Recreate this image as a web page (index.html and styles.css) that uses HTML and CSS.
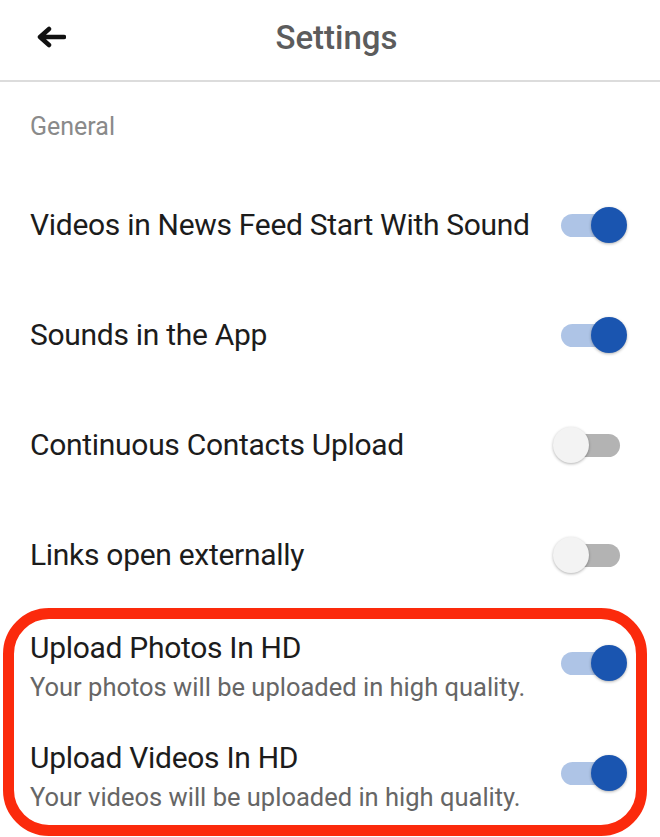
FILE: index.html
```html
<!DOCTYPE html>
<html lang="en">
<head>
    <meta charset="UTF-8">
    <meta name="viewport" content="width=device-width, initial-scale=1.0">
    <title>Settings</title>
    <link rel="stylesheet" href="styles.css">
</head>
<body>
    <!-- top bar -->
    <div class="top-bar">
        <svg class="back-icon" width="30" height="22" viewBox="0 0 30 22">
            <path d="M28 11 H5 M13 3 L4 11 L13 19" fill="none" stroke="#111" stroke-width="4.5" stroke-linecap="round" stroke-linejoin="round"/>
        </svg>
        <div class="top-title">Settings</div>
        <div></div>
    </div>

    <div class="section-label">General</div>

    <div class="setting-row">
        <span class="row-title">Videos in News Feed Start With Sound</span>
        <div class="switch on"><span class="knob"></span></div>
    </div>
    <div class="setting-row">
        <span class="row-title">Sounds in the App</span>
        <div class="switch on"><span class="knob"></span></div>
    </div>
    <div class="setting-row">
        <span class="row-title">Continuous Contacts Upload</span>
        <div class="switch"><span class="knob"></span></div>
    </div>
    <div class="setting-row">
        <span class="row-title">Links open externally</span>
        <div class="switch"><span class="knob"></span></div>
    </div>

    <!-- highlighted block -->
    <div class="highlight">
        <div class="setting-row tall">
            <div class="row-text">
                <div class="row-title">Upload Photos In HD</div>
                <div class="row-sub">Your photos will be uploaded in high quality.</div>
            </div>
            <div class="switch on"><span class="knob"></span></div>
        </div>
        <div class="setting-row tall">
            <div class="row-text">
                <div class="row-title">Upload Videos In HD</div>
                <div class="row-sub">Your videos will be uploaded in high quality.</div>
            </div>
            <div class="switch on"><span class="knob"></span></div>
        </div>
    </div>
</body>
</html>
```

FILE: styles.css
```css
body{
    margin: 0;
    background: #fff;
    font-family: Roboto, "Liberation Sans", sans-serif;
    color: #1c1c1c;
}

.top-bar{
    height: 80px;
    display: grid;
    grid-template-columns: 1fr auto 1fr;
    align-items: center;
    border-bottom: 2px solid #dcdcdc;
}

.back-icon{
    margin-left: 36px;
    margin-top: -6px;
}

.top-title{
    font-size: 33px;
    font-weight: 500;
    color: #5c5c5c;
    padding-left: 13px;
    margin-top: -6px;
}

.section-label{
    font-size: 25px;
    line-height: 28px;
    color: #8a8a8a;
    padding: 31px 30px 0;
    margin-bottom: 29px;
}

.setting-row{
    height: 110px;
    display: flex;
    align-items: center;
    justify-content: space-between;
    padding: 0 40px 0 30px;
}

.row-title{
    font-size: 30px;
    line-height: 36px;
    letter-spacing: -0.3px;
    color: #1c1c1c;
}

.row-sub{
    font-size: 25.5px;
    line-height: 30px;
    color: #666;
    margin-top: 6px;
}

/* toggle */
.switch{
    position: relative;
    width: 59px;
    height: 23px;
    border-radius: 12px;
    background: #b3b3b3;
    flex-shrink: 0;
}

.switch .knob{
    position: absolute;
    top: -6.5px;
    left: -8px;
    width: 36px;
    height: 36px;
    border-radius: 50%;
    background: #f3f3f3;
    box-shadow: 0 1px 3px rgba(0,0,0,0.3);
}

.switch.on{
    background: #aec4e6;
}

.switch.on .knob{
    left: 30px;
    background: #1a55b0;
}

/* red annotation box */
.highlight{
    margin: -2px 13px 0 3px;
    border: 11px solid #fb2a0c;
    border-radius: 46px;
    padding: 11px 16px 13px;
    display: flex;
    flex-direction: column;
    gap: 38px;
}

.highlight .setting-row{
    height: auto;
    padding: 0;
}

.highlight .switch{
    margin-bottom: 6px;
}
```
